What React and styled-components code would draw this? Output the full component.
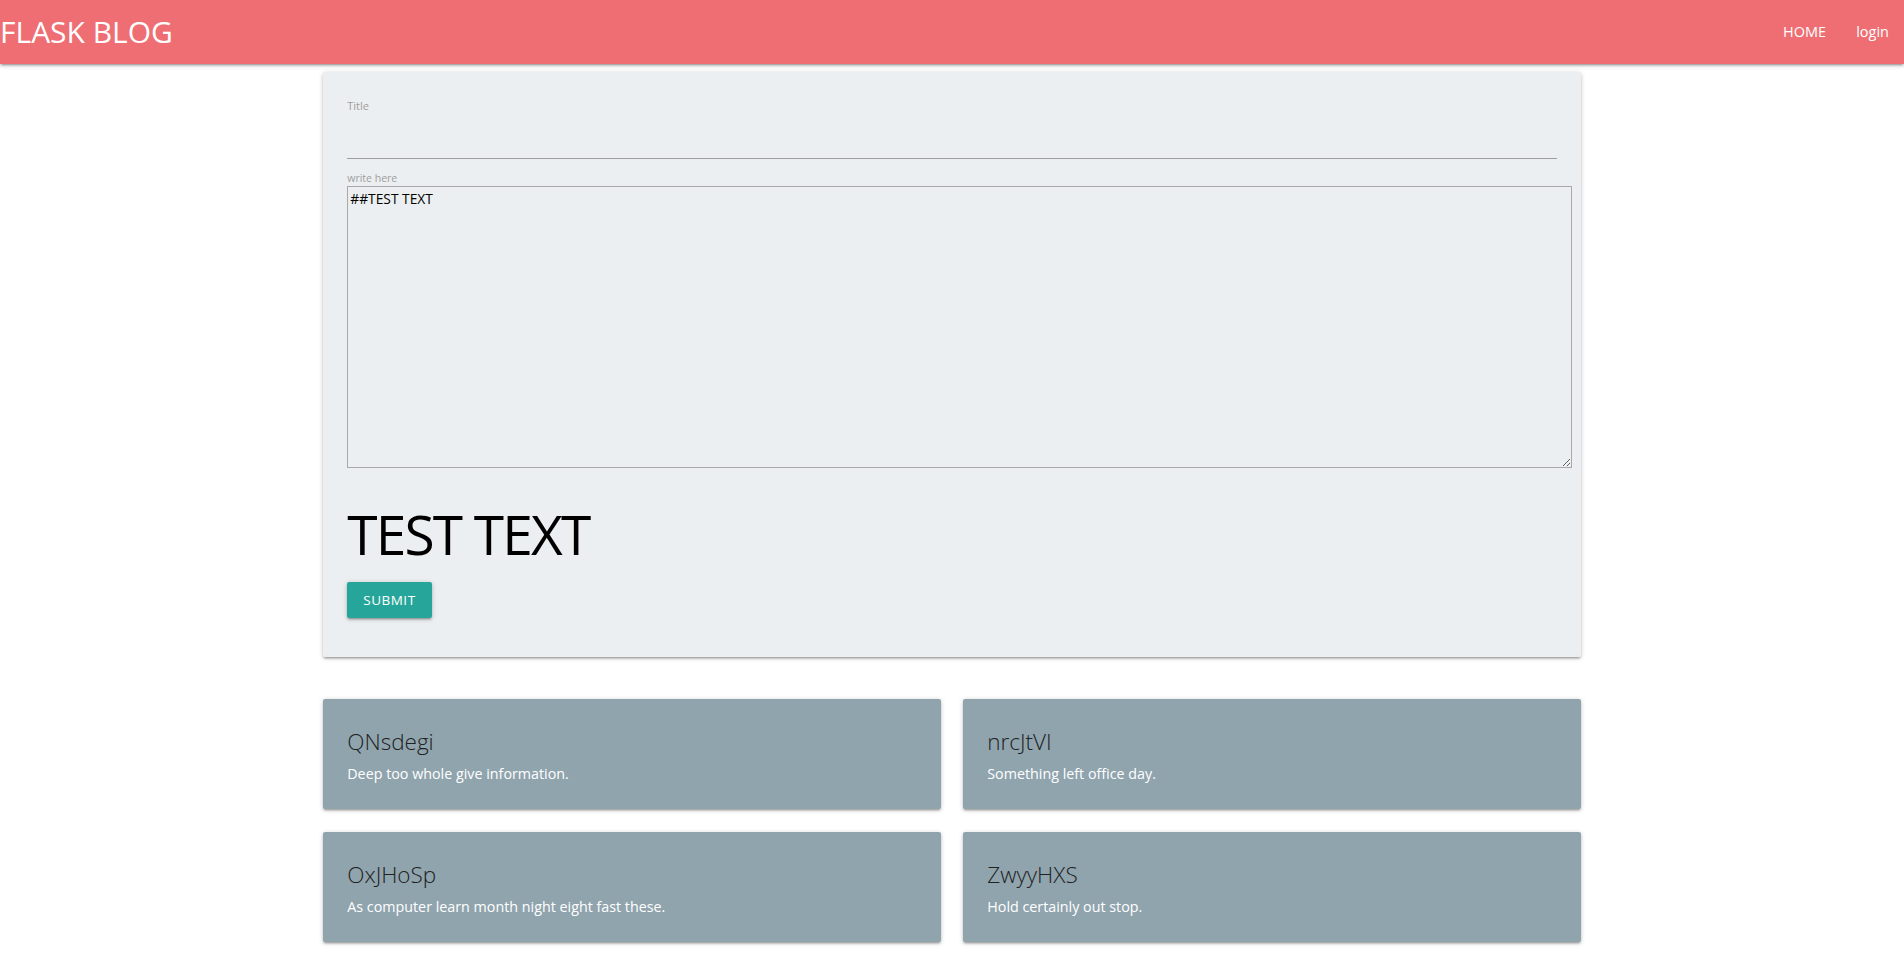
import React from 'react';
import styled, { createGlobalStyle } from 'styled-components';

const GlobalStyle = createGlobalStyle`
  html {
    font-size: 15px;
  }
  body {
    margin: 0;
    font-family: "Open Sans", "Noto Sans", sans-serif;
    color: rgba(0, 0, 0, 0.87);
    background: #fff;
  }
  * {
    box-sizing: border-box;
  }
`;

const Nav = styled.nav`
  height: 64px;
  background: #ee6e73;
  color: #fff;
  display: flex;
  align-items: center;
  justify-content: space-between;
  box-shadow: 0 2px 2px 0 rgba(0, 0, 0, 0.14), 0 3px 1px -2px rgba(0, 0, 0, 0.12),
    0 1px 5px 0 rgba(0, 0, 0, 0.2);
`;

const Brand = styled.a`
  font-size: 30px;
  color: #fff;
  text-decoration: none;
  line-height: 64px;
`;

const NavLinks = styled.ul`
  display: flex;
  margin: 0;
  padding: 0;
  list-style: none;
`;

const NavLink = styled.a`
  display: block;
  padding: 0 15px;
  font-size: 14.5px;
  line-height: 64px;
  color: #fff;
  text-decoration: none;
`;

const Container = styled.main`
  width: 1257.5px;
  margin: 0 auto;
  padding-bottom: 20px;
`;

const FormCard = styled.form`
  margin-top: 7.5px;
  background: #eceff1;
  border-radius: 2px;
  padding: 24px;
  box-shadow: 0 2px 2px 0 rgba(0, 0, 0, 0.14), 0 3px 1px -2px rgba(0, 0, 0, 0.12),
    0 1px 5px 0 rgba(0, 0, 0, 0.2);
`;

const FieldLabel = styled.label`
  display: block;
  font-size: ${(p) => p.$size || 11}px;
  line-height: ${(p) => p.$line || 20}px;
  color: #9e9e9e;
`;

const TitleInput = styled.input`
  display: block;
  width: 100%;
  height: 43px;
  margin: 0 0 12px;
  padding: 0;
  border: none;
  border-bottom: 1px solid #9e9e9e;
  background: transparent;
  outline: none;
  font: inherit;
  font-size: 15px;
`;

const Editor = styled.textarea`
  display: block;
  width: 1225px;
  height: 282px;
  margin: 1px 0 0;
  padding: 2px;
  border: 1px solid #a9a9a9;
  background: transparent;
  font-family: "Open Sans", "Noto Sans", sans-serif;
  font-size: 13.8px;
  line-height: 19px;
  color: #000;
`;

const Preview = styled.h1`
  margin: 37px 0 19px;
  font-size: 55px;
  font-weight: 400;
  line-height: 58px;
  letter-spacing: -1.8px;
  color: #000;
`;

const SubmitButton = styled.button`
  display: block;
  height: 36px;
  padding: 0 16px;
  margin-bottom: 15px;
  border: none;
  border-radius: 2px;
  background: #26a69a;
  color: #fff;
  font-family: inherit;
  font-size: 13.5px;
  letter-spacing: 0.5px;
  text-transform: uppercase;
  box-shadow: 0 2px 2px 0 rgba(0, 0, 0, 0.14), 0 3px 1px -2px rgba(0, 0, 0, 0.12),
    0 1px 5px 0 rgba(0, 0, 0, 0.2);
  cursor: pointer;
`;

const PostGrid = styled.section`
  display: grid;
  grid-template-columns: 1fr 1fr;
  column-gap: 22.5px;
  row-gap: 22.5px;
  margin-top: 42px;
`;

const PostCard = styled.article`
  background: #90a4ae;
  border-radius: 2px;
  padding: 24px;
  box-shadow: 0 2px 2px 0 rgba(0, 0, 0, 0.14), 0 3px 1px -2px rgba(0, 0, 0, 0.12),
    0 1px 5px 0 rgba(0, 0, 0, 0.2);
`;

const PostTitle = styled.span`
  display: block;
  font-size: 22.5px;
  font-weight: 300;
  line-height: 32px;
  padding-top: 3px;
  margin-bottom: 5px;
  color: #212121;
`;

const PostText = styled.p`
  margin: 0;
  font-size: 14.3px;
  line-height: 22.5px;
  color: #fff;
`;

const posts = [
  { title: 'QNsdegi', body: 'Deep too whole give information.' },
  { title: 'nrcJtVI', body: 'Something left office day.' },
  { title: 'OxJHoSp', body: 'As computer learn month night eight fast these.' },
  { title: 'ZwyyHXS', body: 'Hold certainly out stop.' },
];

const App = () => (
  <>
    <GlobalStyle />
    <Nav>
      <Brand href="#">FLASK BLOG</Brand>
      <NavLinks>
        <li>
          <NavLink href="#">HOME</NavLink>
        </li>
        <li>
          <NavLink href="#">login</NavLink>
        </li>
      </NavLinks>
    </Nav>
    <Container>
      <FormCard onSubmit={(e) => e.preventDefault()}>
        <FieldLabel htmlFor="title">Title</FieldLabel>
        <TitleInput id="title" type="text" />
        <FieldLabel htmlFor="body" $size={10.5} $line={14}>
          write here
        </FieldLabel>
        <Editor id="body" defaultValue="##TEST TEXT" />
        <Preview>TEST TEXT</Preview>
        <SubmitButton type="submit">Submit</SubmitButton>
      </FormCard>
      <PostGrid>
        {posts.map((post) => (
          <PostCard key={post.title}>
            <PostTitle>{post.title}</PostTitle>
            <PostText>{post.body}</PostText>
          </PostCard>
        ))}
      </PostGrid>
    </Container>
  </>
);

export default App;
